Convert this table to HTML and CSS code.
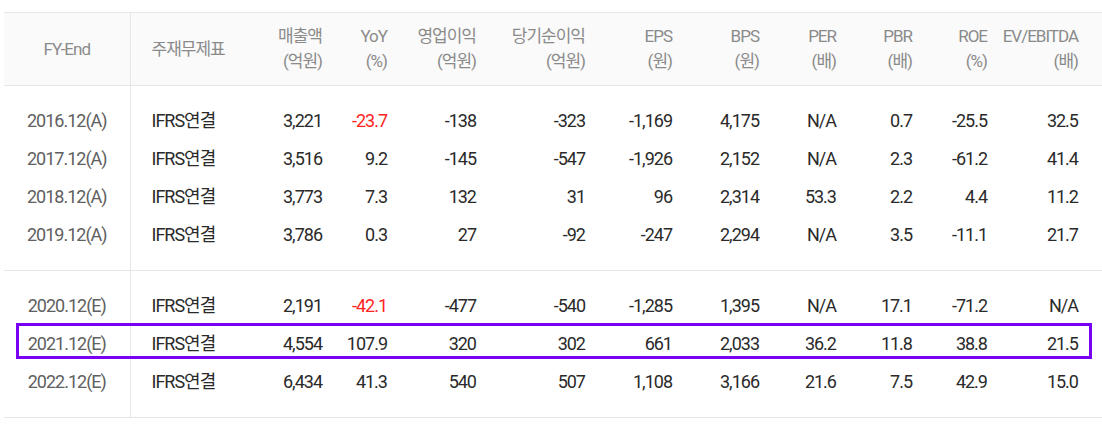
FILE: index.html
```html
<!DOCTYPE html>
<html lang="ko">
<head>
<meta charset="utf-8">
<link rel="stylesheet" href="styles.css">
</head>
<body>
<table class="fin">
  <colgroup>
    <col class="c1"><col class="c2"><col class="c3"><col class="c4"><col class="c5"><col class="c6">
    <col class="c7"><col class="c8"><col class="c9"><col class="c10"><col class="c11"><col class="c12">
  </colgroup>
  <thead>
    <tr>
      <th class="fy">FY-End</th>
      <th class="left">주재무제표</th>
      <th>매출액<br>(억원)</th>
      <th>YoY<br>(%)</th>
      <th>영업이익<br>(억원)</th>
      <th>당기순이익<br>(억원)</th>
      <th>EPS<br>(원)</th>
      <th>BPS<br>(원)</th>
      <th>PER<br>(배)</th>
      <th>PBR<br>(배)</th>
      <th>ROE<br>(%)</th>
      <th class="last">EV/EBITDA<br>(배)</th>
    </tr>
  </thead>
  <tbody>
    <tr class="first">
      <td class="fy">2016.12(A)</td><td class="left">IFRS연결</td><td>3,221</td><td class="neg">-23.7</td><td>-138</td><td>-323</td><td>-1,169</td><td>4,175</td><td>N/A</td><td>0.7</td><td>-25.5</td><td class="last">32.5</td>
    </tr>
    <tr>
      <td class="fy">2017.12(A)</td><td class="left">IFRS연결</td><td>3,516</td><td>9.2</td><td>-145</td><td>-547</td><td>-1,926</td><td>2,152</td><td>N/A</td><td>2.3</td><td>-61.2</td><td class="last">41.4</td>
    </tr>
    <tr>
      <td class="fy">2018.12(A)</td><td class="left">IFRS연결</td><td>3,773</td><td>7.3</td><td>132</td><td>31</td><td>96</td><td>2,314</td><td>53.3</td><td>2.2</td><td>4.4</td><td class="last">11.2</td>
    </tr>
    <tr class="lastrow">
      <td class="fy">2019.12(A)</td><td class="left">IFRS연결</td><td>3,786</td><td>0.3</td><td>27</td><td>-92</td><td>-247</td><td>2,294</td><td>N/A</td><td>3.5</td><td>-11.1</td><td class="last">21.7</td>
    </tr>
  </tbody>
  <tbody>
    <tr class="first">
      <td class="fy">2020.12(E)</td><td class="left">IFRS연결</td><td>2,191</td><td class="neg">-42.1</td><td>-477</td><td>-540</td><td>-1,285</td><td>1,395</td><td>N/A</td><td>17.1</td><td>-71.2</td><td class="last">N/A</td>
    </tr>
    <tr class="hl">
      <td class="fy">2021.12(E)</td><td class="left">IFRS연결</td><td>4,554</td><td>107.9</td><td>320</td><td>302</td><td>661</td><td>2,033</td><td>36.2</td><td>11.8</td><td>38.8</td><td class="last">21.5</td>
    </tr>
    <tr class="lastrow">
      <td class="fy">2022.12(E)</td><td class="left">IFRS연결</td><td>6,434</td><td>41.3</td><td>540</td><td>507</td><td>1,108</td><td>3,166</td><td>21.6</td><td>7.5</td><td>42.9</td><td class="last">15.0</td>
    </tr>
  </tbody>
</table>
</body>
</html>
```

FILE: styles.css
```css
html, body {
  margin: 0;
  padding: 0;
  background: #fff;
}
body {
  padding-top: 12px;
  font-family: Roboto, "Noto Sans CJK KR", sans-serif;
}
.fin {
  margin-left: 4px;
  width: 1098px;
  border-collapse: collapse;
  table-layout: fixed;
  letter-spacing: -1px;
}
.c1 { width: 126px; }
.c2 { width: 110px; }
.c3 { width: 82px; }
.c4 { width: 65px; }
.c5 { width: 89px; }
.c6 { width: 109px; }
.c7 { width: 87px; }
.c8 { width: 87px; }
.c9 { width: 77px; }
.c10 { width: 76px; }
.c11 { width: 75px; }
.c12 { width: 115px; }

.fin thead th {
  background: #fafafa;
  border-top: 1px solid #e6e6e6;
  border-bottom: 1px solid #e6e6e6;
  color: #8a8a8a;
  font-weight: 400;
  font-size: 17px;
  line-height: 25px;
  height: 72px;
  padding: 0;
  text-align: right;
  vertical-align: middle;
}
.fin td {
  font-size: 18px;
  line-height: 38px;
  height: 38px;
  padding: 0;
  color: #2a2a2a;
  text-align: right;
  white-space: nowrap;
}
.fin tbody tr.first td { padding-top: 16px; }
.fin tbody tr.lastrow td { padding-bottom: 16px; }
.fin tbody { border-bottom: 1px solid #e6e6e6; }

.fin .fy {
  text-align: center;
  border-right: 1px solid #e6e6e6;
}
.fin td.fy { color: #606060; }
.fin .left {
  text-align: left;
  padding-left: 21px;
}
.fin .last { padding-right: 24px; }
.fin td.neg { color: #ff2424; }

.fin tr.hl td.fy { position: relative; }
.fin tr.hl td.fy::after {
  content: "";
  position: absolute;
  left: 12px;
  top: -2px;
  width: 1070px;
  height: 30px;
  border: 3px solid #7a00f5;
}
```
